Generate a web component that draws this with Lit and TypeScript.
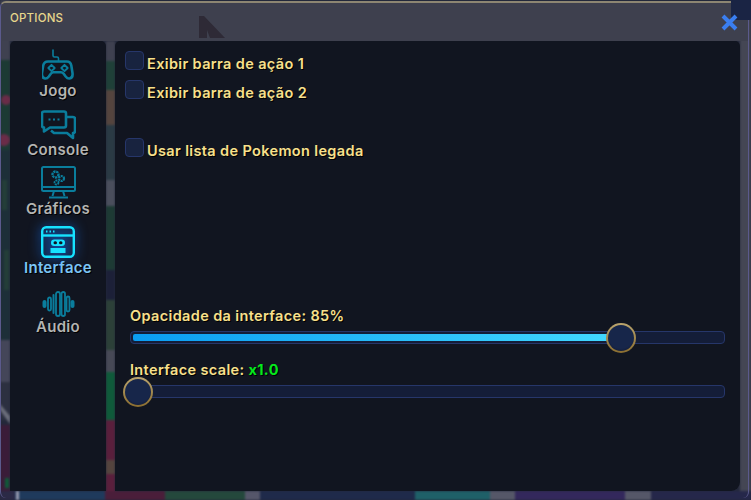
import { LitElement, html, css, svg } from "lit";
import { customElement } from "lit/decorators.js";

const icons: Record<string, unknown> = {
  jogo: svg`<svg class="ico" style="width:32px;height:32px" viewBox="0 0 32 32" fill="none" stroke="currentColor" stroke-width="2.600" stroke-linejoin="round" stroke-linecap="round">
    <path d="M11 1v5.500q0 1.500 1.500 1.500h2.500q1.500 0 1.500 1.500V12" stroke-width="1.600"/>
    <path d="M8 12.500h17q3.500 0 4.300 4l1.200 7.500q.6 5-3 5.500-2 .3-3.800-2l-2.200-3q-1-1.200-2.500-1.200h-7.500q-1.500 0-2.500 1.200l-2.200 3q-1.800 2.300-3.800 2-3.600-.5-3-5.500l1.200-7.500q.8-4 4.800-4Z"/>
    <path d="M9.500 15.800l3.200 3.200-3.200 3.200-3.200-3.200ZM22.500 15.800l3.200 3.200-3.200 3.200-3.200-3.200Z" stroke-width="1.800"/>
  </svg>`,
  console: svg`<svg class="ico" style="width:35px;height:30px" viewBox="0 0 35 30" fill="none" stroke="currentColor" stroke-width="2.600" stroke-linejoin="round">
    <path d="M3 1.500h20q2 0 2 2v12q0 2-2 2H9l-6 4v-4q-2 0-2-2v-12q0-2 2-2Z"/>
    <path d="M26 7h6q2 0 2 2v12q0 2-2 2v5l-6-5H13l-3-2.500"/>
    <path d="M7.500 9.500h2M12 9.500h2M16.500 9.500h2" stroke-width="2.200"/>
  </svg>`,
  graficos: svg`<svg class="ico" style="width:35px;height:33px" viewBox="0 0 35 33" fill="none" stroke="currentColor" stroke-width="2">
    <rect x="1" y="1" width="33" height="24" rx="1.500"/>
    <path d="M1 21h33M13 25l-1.500 5M22 25l1.500 5M8 31.500h19" />
    <circle cx="14.500" cy="8.500" r="3" stroke-width="2.400" stroke-dasharray="2.200 .7"/>
    <circle cx="20.500" cy="12.500" r="2.500" stroke-width="2.200" stroke-dasharray="2 .7"/>
    <circle cx="15.500" cy="16.500" r="2" stroke-width="1.800" stroke-dasharray="1.800 .7"/>
  </svg>`,
  interface: svg`<svg class="ico" style="width:34px;height:32px" viewBox="0 0 34 32" fill="none" stroke="currentColor" stroke-width="2.400">
    <rect x="1.200" y="1.200" width="31.600" height="29.600" rx="4"/>
    <path d="M1 9.500h32"/>
    <path d="M5 5.500h1.500M8.500 5.500h1.500M12 5.500h1.500" stroke-width="2"/>
    <rect x="10" y="13.500" width="14" height="6.500" rx="3.200" fill="currentColor" stroke="none"/>
    <path d="M14 16.700h.5M19.500 16.700h.5" stroke="#0f1420" stroke-width="3" stroke-linecap="round"/>
    <rect x="9.500" y="22" width="15" height="5" fill="currentColor" stroke="none"/>
  </svg>`,
  audio: svg`<svg class="ico" style="width:33px;height:26px" viewBox="0 0 33 26" fill="none" stroke="currentColor" stroke-width="1.800" stroke-linecap="round">
    <rect x="0.500" y="9" width="4" height="8" rx="2" fill="currentColor" stroke="none"/>
    <rect x="6" y="6.500" width="3" height="13" rx="1.500"/>
    <rect x="10.500" y="3" width="2" height="20" rx="1" fill="currentColor" stroke="none"/>
    <rect x="14" y="1" width="4" height="24" rx="2"/>
    <rect x="19.500" y="1" width="3.500" height="24" rx="1.700"/>
    <rect x="24.500" y="5.500" width="3" height="15" rx="1.500"/>
    <rect x="28.500" y="9" width="4" height="8" rx="2" fill="currentColor" stroke="none"/>
  </svg>`,
};

const NAV = [
  { id: "jogo", label: "Jogo" },
  { id: "console", label: "Console" },
  { id: "graficos", label: "Gráficos" },
  { id: "interface", label: "Interface", active: true },
  { id: "audio", label: "Áudio" },
];

const Backdrop = svg`<svg class="backdrop" viewBox="0 0 751 500" preserveAspectRatio="none">
  <rect width="751" height="500" fill="#23283a"/>
  <rect x="0" y="0" width="10" height="60" fill="#3f4150"/>
  <rect x="0" y="60" width="10" height="90" fill="#1c3a34"/>
  <circle cx="6" cy="100" r="5" fill="#6a2c48"/><circle cx="4" cy="140" r="6" fill="#6a2c48"/>
  <rect x="0" y="150" width="10" height="190" fill="#1d2f38"/>
  <rect x="2" y="180" width="5" height="30" fill="#243e38"/>
  <rect x="4" y="250" width="5" height="40" fill="#243e38"/>
  <rect x="0" y="340" width="10" height="42" fill="#444659"/>
  <rect x="0" y="382" width="10" height="38" fill="#2c3040"/>
  <path d="M0 410l10 14v-8l-10-12Z" fill="#6a6d7a"/>
  <rect x="0" y="425" width="10" height="66" fill="#3a1c38"/>
  <rect x="5" y="478" width="4" height="10" fill="#0f5a38"/>
  <rect x="106" y="41" width="9" height="20" fill="#3f4150"/>
  <rect x="106" y="61" width="9" height="30" fill="#1f4038"/>
  <rect x="106" y="90" width="9" height="35" fill="#54443e"/>
  <rect x="106" y="125" width="9" height="55" fill="#2a3a44"/>
  <rect x="106" y="180" width="9" height="26" fill="#4a4e5c"/>
  <rect x="106" y="206" width="9" height="64" fill="#1d3a34"/>
  <rect x="106" y="270" width="9" height="30" fill="#1c2038"/>
  <rect x="106" y="300" width="9" height="50" fill="#2c4038"/>
  <rect x="106" y="350" width="9" height="22" fill="#474956"/>
  <rect x="106" y="372" width="9" height="48" fill="#0f5a3a"/>
  <rect x="106" y="420" width="9" height="71" fill="#5a1f3c"/>
  <rect x="106" y="460" width="9" height="14" fill="#54443e"/>
  <rect x="740" y="0" width="11" height="500" fill="#444654"/>
  <rect x="0" y="491" width="751" height="9" fill="#2b2a46"/>
  <rect x="15" y="491" width="90" height="9" fill="#1f3a5c"/>
  <rect x="105" y="491" width="60" height="9" fill="#4a1e3a"/>
  <rect x="165" y="491" width="80" height="9" fill="#24483c"/>
  <rect x="245" y="491" width="15" height="9" fill="#55566a"/>
  <rect x="260" y="491" width="155" height="9" fill="#1f2a4a"/>
  <rect x="415" y="491" width="75" height="9" fill="#1f6068"/>
  <rect x="490" y="491" width="25" height="9" fill="#555768"/>
  <rect x="515" y="491" width="110" height="9" fill="#33285c"/>
  <rect x="625" y="491" width="26" height="9" fill="#555768"/>
  <rect x="651" y="491" width="100" height="9" fill="#25274a"/>
  <rect x="16" y="491" width="3" height="9" fill="#9a9cb0"/>
</svg>`;

@customElement("app-root")
export class AppRoot extends LitElement {
  static styles = css`
    :host {
      display: block;
      position: relative;
      width: 751px;
      height: 500px;
      overflow: hidden;
      background: #23283a;
      font-family: "Inter", "Noto Sans", sans-serif;
    }
    .backdrop {
      position: absolute;
      inset: 0;
      width: 751px;
      height: 500px;
      filter: blur(0.8px);
    }
    .window {
      position: relative;
      box-sizing: border-box;
      width: 749px;
      height: 497px;
      margin-top: 1px;
      border-top: 2px solid #8d8672;
      border-left: 1px solid #5b5a8c;
      border-right: 1px solid #5b5a8c;
      border-radius: 6px;
      display: flex;
      flex-direction: column;
    }
    .corner {
      position: absolute;
      top: -3px;
      right: -3px;
      width: 20px;
      height: 20px;
      background: #1a2444;
      border-bottom-left-radius: 4px;
    }
    .titlebar {
      height: 38px;
      flex: none;
      box-sizing: border-box;
      padding: 8px 9px 0;
      background: #3e404e;
      position: relative;
      border-radius: 5px 5px 0 0;
    }
    .title {
      font-size: 11.5px;
      font-weight: 500;
      color: #e6d68c;
      line-height: 14px;
      letter-spacing: 0.2px;
    }
    .sail {
      position: absolute;
      left: 197px;
      top: 13px;
      width: 28px;
      height: 22px;
    }
    .close {
      position: absolute;
      right: 10px;
      top: 11px;
      width: 17px;
      height: 17px;
    }
    .body {
      flex: none;
      height: 450px;
      display: flex;
      gap: 9px;
      padding: 0 8px 0 9px;
    }
    .side {
      width: 96px;
      flex: none;
      background: #111520;
      border-radius: 5px 5px 0 0;
      display: flex;
      flex-direction: column;
      padding-top: 2px;
      box-sizing: border-box;
    }
    .nav {
      height: 59px;
      display: flex;
      flex-direction: column;
      align-items: center;
      justify-content: flex-end;
      padding-bottom: 2px;
      box-sizing: border-box;
      color: #0a7d9c;
    }
    .ico {
      display: block;
      flex: none;
    }
    .nav span {
      font-size: 15px;
      font-weight: 600;
      line-height: 18px;
      margin-top: 1px;
      color: #b4b4b2;
      text-shadow: 1px 1px 0 #000;
      letter-spacing: 0.3px;
    }
    .nav.active {
      color: #16e2ff;
    }
    .nav.active .ico {
      filter: drop-shadow(0 0 6px rgba(20, 120, 255, 0.9));
    }
    .nav.active span {
      color: #7cc6f6;
    }
    .main {
      flex: 1;
      background: #111520;
      border-radius: 5px 5px 9px 0;
      padding: 10px 15px 0 10px;
      box-sizing: border-box;
      display: flex;
      flex-direction: column;
    }
    .check {
      height: 29px;
      flex: none;
      display: flex;
      gap: 3px;
      color: #f8e08c;
      font-size: 14.5px;
      font-weight: 600;
      letter-spacing: 0.36px;
      text-shadow: 1px 1px 0 #000;
    }
    .check.later {
      margin-top: 29px;
    }
    .check i {
      flex: none;
      box-sizing: border-box;
      width: 19px;
      height: 19px;
      border-radius: 4px;
      background: #18233f;
      border: 1px solid #26366a;
    }
    .check b {
      font-weight: inherit;
      line-height: 26px;
    }
    .sliders {
      margin: 137px 0 0 5px;
      display: flex;
      flex-direction: column;
      gap: 14px;
    }
    .s-label {
      height: 27px;
      color: #f8e08c;
      font-size: 14.5px;
      font-weight: 600;
      letter-spacing: 0.36px;
      line-height: 24px;
      text-shadow: 1px 1px 0 #000;
    }
    .s-label em {
      font-style: normal;
      font-weight: 700;
      color: #04e81c;
    }
    .track {
      position: relative;
      box-sizing: border-box;
      height: 13px;
      border: 1px solid #26366a;
      border-radius: 4px;
      background: #141d38;
      padding: 2px;
    }
    .fill {
      height: 7px;
      border-radius: 2px;
      background: linear-gradient(90deg, #0a9cf2, #42d8ff);
    }
    .thumb {
      position: absolute;
      top: -9px;
      box-sizing: border-box;
      width: 30px;
      height: 30px;
      border-radius: 50%;
      border: 2px solid transparent;
      background:
        radial-gradient(circle at 50% 42%, #17264a 62%, #0c1226 100%) padding-box,
        linear-gradient(180deg, #bba56e, #8a6d30) border-box;
    }
  `;

  private slider(label: unknown, pct: number) {
    const center = 7 + pct * 568.2;
    return html`<div>
      <div class="s-label">${label}</div>
      <div class="track">
        ${pct > 0 ? html`<div class="fill" style="width:${center - 4}px"></div>` : ""}
        <div class="thumb" style="left:${center - 15}px"></div>
      </div>
    </div>`;
  }

  render() {
    return html`
      ${Backdrop}
      <div class="window">
        <div class="titlebar">
          <div class="title">OPTIONS</div>
          <svg class="sail" viewBox="0 0 28 22"><path d="M1 0h5l21 22H12l-3-8v8H1Z" fill="#2e2a36"/></svg>
          <div class="corner"></div>
          <svg class="close" viewBox="0 0 17 17"><path d="M2 2l13 13M15 2L2 15" stroke="#3a7ef0" stroke-width="4"/></svg>
        </div>
        <div class="body">
          <div class="side">
            ${NAV.map(
              (n) => html`<div class="nav ${n.active ? "active" : ""}">
                ${icons[n.id]}<span>${n.label}</span>
              </div>`
            )}
          </div>
          <div class="main">
            <div class="check"><i></i><b>Exibir barra de ação 1</b></div>
            <div class="check"><i></i><b>Exibir barra de ação 2</b></div>
            <div class="check later"><i></i><b>Usar lista de Pokemon legada</b></div>
            <div class="sliders">
              ${this.slider("Opacidade da interface: 85%", 0.85)}
              ${this.slider(html`Interface scale: <em>x1.0</em>`, 0)}
            </div>
          </div>
        </div>
      </div>
    `;
  }
}
